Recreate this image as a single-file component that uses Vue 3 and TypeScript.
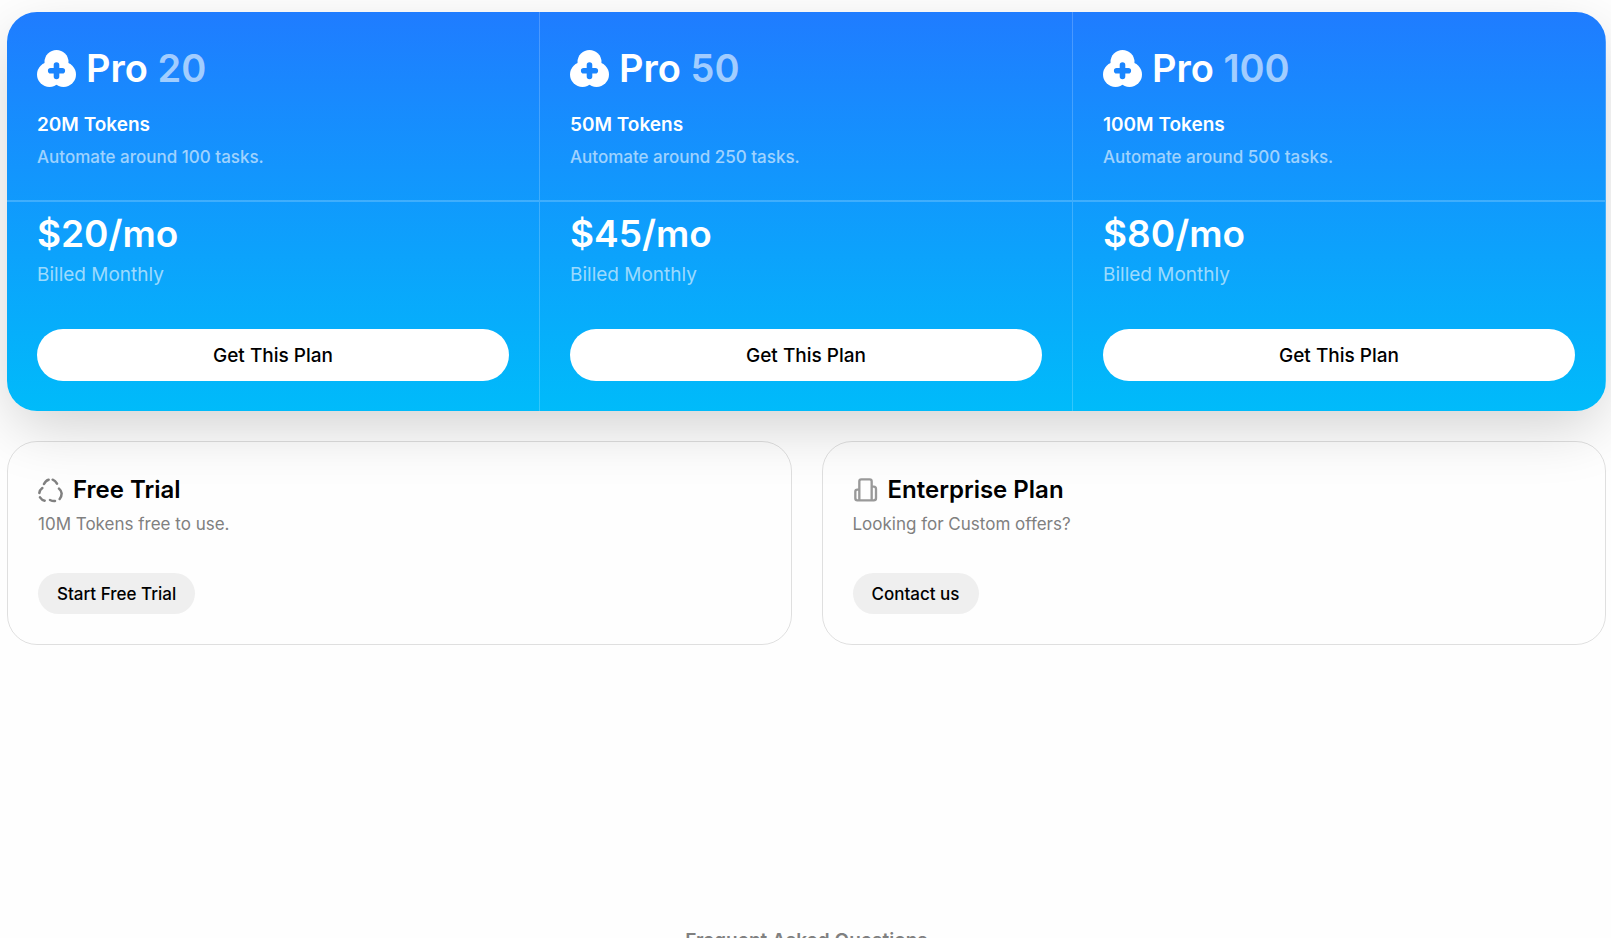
<script setup lang="ts">
interface Plan {
  name: string
  size: number
  tasks: number
  price: number
}

const plans: Plan[] = [
  { name: 'Pro', size: 20, tasks: 100, price: 20 },
  { name: 'Pro', size: 50, tasks: 250, price: 45 },
  { name: 'Pro', size: 100, tasks: 500, price: 80 },
]
</script>

<template>
  <main class="page">
    <section class="plans">
      <article v-for="plan in plans" :key="plan.size" class="plan">
        <div class="plan-info">
          <h2 class="plan-name">
            <svg class="plan-icon" viewBox="0 0 39 37" aria-hidden="true">
              <mask :id="`plus-${plan.size}`" maskUnits="userSpaceOnUse" x="0" y="0" width="39" height="37">
                <rect width="39" height="37" fill="#fff" />
                <path d="M19.5 15v11.5M13.7 20.7h11.6" stroke="#000" stroke-width="5.6" stroke-linecap="round" />
              </mask>
              <g :mask="`url(#plus-${plan.size})`" fill="#fff">
                <circle cx="19.5" cy="12" r="12" />
                <circle cx="12.5" cy="24.5" r="12.5" />
                <circle cx="26.5" cy="24.5" r="12.5" />
              </g>
            </svg>
            <span>{{ plan.name }} <span class="faded">{{ plan.size }}</span></span>
          </h2>
          <p class="tokens">{{ plan.size }}M Tokens</p>
          <p class="tasks faded">Automate around {{ plan.tasks }} tasks.</p>
        </div>
        <div class="plan-price">
          <p class="price">${{ plan.price }}/mo</p>
          <p class="billing faded">Billed Monthly</p>
          <button type="button" class="get-plan">Get This Plan</button>
        </div>
      </article>
    </section>

    <section class="options">
      <article class="option">
        <h3 class="option-name">
          <svg class="option-icon" viewBox="0 0 75 75" fill="none" stroke="#808080" stroke-width="7.5" stroke-linecap="round" aria-hidden="true">
            <path d="M32 5Q23 7 18 18M44 5Q52 8 57 17M13 30Q5 36 4 45M6 58Q12 67 20 68M36 66Q44 70 51 69M63 32Q70 38 71 46Q71 56 65 63" />
          </svg>
          Free Trial
        </h3>
        <p class="option-text">10M Tokens free to use.</p>
        <button type="button" class="option-button">Start Free Trial</button>
      </article>
      <article class="option">
        <h3 class="option-name">
          <svg class="option-icon" viewBox="0 0 75 75" fill="none" stroke="#999" stroke-width="7" stroke-linejoin="round" aria-hidden="true">
            <path d="M19 67V10Q19 4 25 4H50Q56 4 56 10V67M19 35H13Q7 35 7 41V61Q7 67 13 67H62Q69 67 69 61V33Q69 26 62 26H56" />
          </svg>
          Enterprise Plan
        </h3>
        <p class="option-text">Looking for Custom offers?</p>
        <button type="button" class="option-button">Contact us</button>
      </article>
    </section>

    <h2 class="faq">Frequent Asked Questions</h2>
  </main>
</template>

<style>
body {
  background: #fefefe;
}

html,
body {
  overflow: hidden;
}
</style>

<style scoped>
.page {
  box-sizing: border-box;
  height: 100vh;
  overflow: hidden;
  padding: 12px 5px 0 7px;
  color: #000;
  font-family: Inter, "Liberation Sans", sans-serif;
}

h2,
h3,
p {
  margin: 0;
}

button {
  border: 0;
  color: #000;
  font-family: inherit;
  font-weight: 500;
  cursor: pointer;
}

.plans {
  display: grid;
  grid-template-columns: repeat(3, 1fr);
  overflow: hidden;
  border-radius: 30px;
  background: linear-gradient(#1f7cff, #00bbfa);
  box-shadow: 0 20px 60px -5px rgba(0, 0, 0, 0.18);
  color: #fff;
}

.plan {
  border-right: 1px solid rgba(255, 255, 255, 0.2);
}

.plan-info {
  padding: 30px 30px 27px;
  border-bottom: 1px solid rgba(255, 255, 255, 0.2);
}

.plan-name {
  display: flex;
  align-items: center;
  gap: 10px;
  font-size: 38px;
  font-weight: 600;
  line-height: 52px;
}

.plan-icon {
  width: 39px;
  height: 37px;
}

.faded {
  color: rgba(255, 255, 255, 0.6);
}

.tokens {
  margin-top: 15px;
  font-size: 19px;
  font-weight: 600;
  line-height: 32px;
}

.tasks {
  font-size: 17px;
  font-weight: 500;
  line-height: 32px;
}

.plan-price {
  padding: 7px 30px 30px;
  border-top: 1px solid rgba(255, 255, 255, 0.2);
}

.price {
  font-size: 37px;
  font-weight: 600;
  line-height: 50px;
}

.billing {
  font-size: 19px;
  line-height: 32px;
}

.get-plan {
  width: 100%;
  height: 52px;
  margin-top: 38px;
  border-radius: 26px;
  background: #fff;
  font-size: 19px;
}

.options {
  display: grid;
  grid-template-columns: repeat(2, 1fr);
  gap: 30px;
  margin-top: 30px;
}

.option {
  padding: 30px;
  border: 1px solid rgba(0, 0, 0, 0.12);
  border-radius: 30px;
}

.option-name {
  display: flex;
  align-items: center;
  gap: 10px;
  font-size: 24px;
  font-weight: 600;
  line-height: 36px;
}

.option-icon {
  width: 25px;
  height: 25px;
}

.option-text {
  color: #808080;
  font-size: 17px;
  line-height: 32px;
}

.option-button {
  height: 41px;
  margin-top: 33px;
  padding: 0 19px;
  border-radius: 21px;
  background: #efefef;
  font-size: 17px;
}

.faq {
  margin-top: 283px;
  color: #808080;
  font-size: 19px;
  font-weight: 600;
  line-height: 26px;
  text-align: center;
}
</style>
